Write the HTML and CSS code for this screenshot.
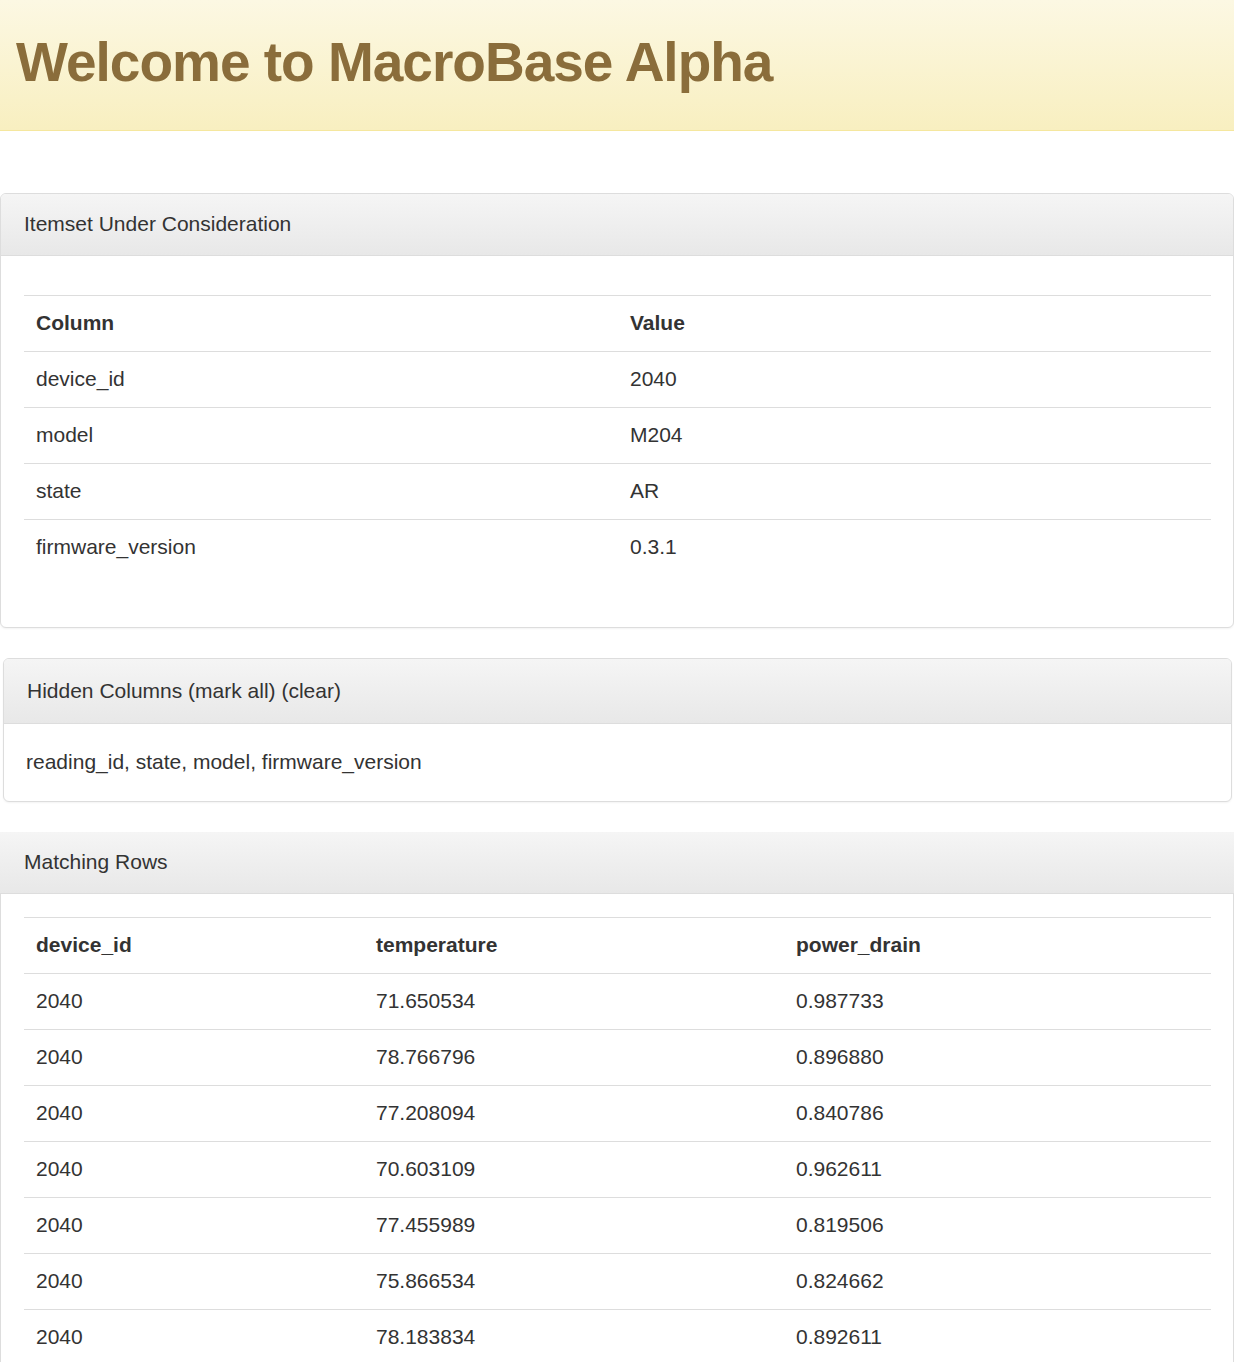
FILE: index.html
```html
<!DOCTYPE html>
<html lang="en">
<head>
<meta charset="utf-8">
<title>MacroBase Alpha</title>
<link rel="stylesheet" href="styles.css">
</head>
<body>
<header class="jumbo">
  <h1 class="jumbo-title">Welcome to MacroBase Alpha</h1>
</header>
<main class="content">
  <section class="panel panel-itemset">
    <div class="panel-heading">Itemset Under Consideration</div>
    <div class="panel-body body-itemset">
      <table class="table table-itemset">
        <thead>
          <tr><th class="col-half">Column</th><th>Value</th></tr>
        </thead>
        <tbody>
          <tr><td>device_id</td><td>2040</td></tr>
          <tr><td>model</td><td>M204</td></tr>
          <tr><td>state</td><td>AR</td></tr>
          <tr><td>firmware_version</td><td>0.3.1</td></tr>
        </tbody>
      </table>
    </div>
  </section>

  <section class="panel panel-hidden">
    <div class="panel-heading heading-tall">Hidden Columns (mark all) (clear)</div>
    <div class="panel-body body-hidden">reading_id, state, model, firmware_version</div>
  </section>

  <section class="panel panel-rows">
    <div class="panel-heading heading-flush">Matching Rows</div>
    <div class="panel-body body-rows">
      <table class="table table-rows">
        <thead>
          <tr><th class="col-a">device_id</th><th class="col-b">temperature</th><th>power_drain</th></tr>
        </thead>
        <tbody>
          <tr><td>2040</td><td>71.650534</td><td>0.987733</td></tr>
          <tr><td>2040</td><td>78.766796</td><td>0.896880</td></tr>
          <tr><td>2040</td><td>77.208094</td><td>0.840786</td></tr>
          <tr><td>2040</td><td>70.603109</td><td>0.962611</td></tr>
          <tr><td>2040</td><td>77.455989</td><td>0.819506</td></tr>
          <tr><td>2040</td><td>75.866534</td><td>0.824662</td></tr>
          <tr><td>2040</td><td>78.183834</td><td>0.892611</td></tr>
        </tbody>
      </table>
    </div>
  </section>
</main>
</body>
</html>
```
FILE: styles.css
```css
* { box-sizing: border-box; }

html, body {
  margin: 0;
  padding: 0;
  background: #fff;
}

body {
  font-family: "Liberation Sans", Arial, Helvetica, sans-serif;
  font-size: 21px;
  line-height: 31px;
  color: #333;
}

.jumbo {
  height: 131px;
  background: linear-gradient(to bottom, #fcf8e3 0%, #f8efc0 100%);
  border-bottom: 1px solid #f5e79e;
  display: flex;
  align-items: center;
  padding: 0 0 0 16px;
}

.jumbo-title {
  margin: 0;
  font-size: 55px;
  line-height: 60px;
  font-weight: bold;
  letter-spacing: -1px;
  color: #8a6d3b;
  position: relative;
  top: -3px;
}

.content {
  padding-top: 62px;
  display: flex;
  flex-direction: column;
  gap: 30px;
}

.panel {
  background: #fff;
  border: 1px solid #ddd;
  border-radius: 6px;
  box-shadow: 0 1px 2px rgba(0, 0, 0, 0.05);
}

.panel-hidden {
  margin: 0 2px 0 3px;
}

.panel-rows {
  border-top: 0;
  border-radius: 0;
}

.panel-heading {
  padding: 14px 22px 16px 23px;
  background: linear-gradient(to bottom, #f5f5f5 0%, #e8e8e8 100%);
  border-bottom: 1px solid #ddd;
  border-radius: 5px 5px 0 0;
  color: #333;
}

.heading-tall {
  padding-top: 16px;
  padding-bottom: 17px;
}

.heading-flush {
  margin: 0 -1px;
  padding-left: 24px;
  border-radius: 0;
}

.panel-body {
  padding: 23px 22px 22px 22px;
}

.body-hidden {
  padding: 22px 22px 24px 22px;
}

.body-itemset {
  padding: 39px 22px 52px 23px;
}

.body-rows {
  padding: 23px 22px 30px 23px;
}

.table {
  width: 100%;
  border-collapse: collapse;
  border-spacing: 0;
}

.table th,
.table td {
  text-align: left;
  padding: 11px 12px 13px 12px;
  border-top: 1px solid #ddd;
  line-height: 31px;
  vertical-align: top;
}

.table th {
  font-weight: bold;
}

.col-half { width: 594px; }
.col-a { width: 340px; }
.col-b { width: 420px; }
```
